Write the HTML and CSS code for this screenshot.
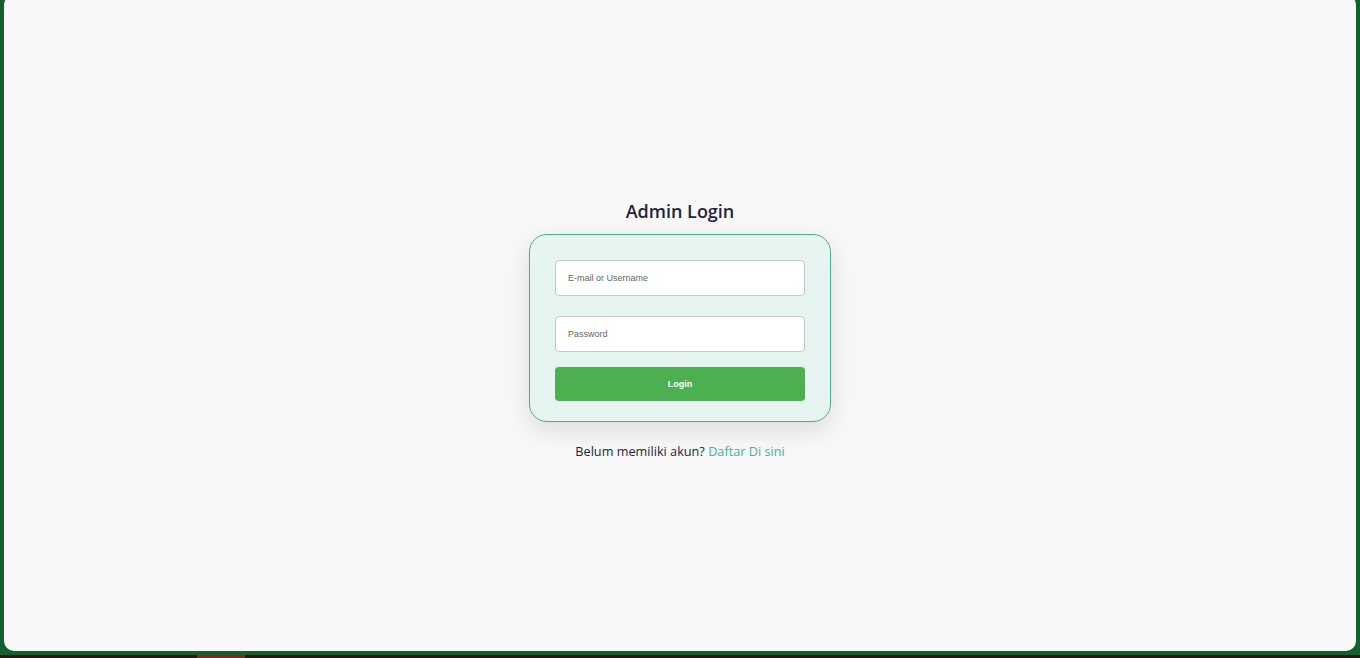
FILE: index.html
```html
<!DOCTYPE html>
<html lang="id">
<head>
<meta charset="utf-8">
<title>Admin Login</title>
<link rel="stylesheet" href="styles.css">
</head>
<body>
  <main class="window">
    <section class="login">
      <h1 class="login-title">Admin Login</h1>
      <form class="login-card">
        <input class="field" type="text" placeholder="E-mail or Username">
        <input class="field field-pass" type="password" placeholder="Password">
        <button class="btn" type="button">Login</button>
      </form>
      <p class="register">Belum memiliki akun? <a class="register-link" href="#">Daftar Di sini</a></p>
    </section>
  </main>
  <div class="taskbar"><span class="task-active"></span></div>
</body>
</html>
```
FILE: styles.css
```css
html, body {
  margin: 0;
  padding: 0;
}
body {
  width: 1360px;
  height: 658px;
  overflow: hidden;
  background: #135f2f;
  display: flex;
  flex-direction: column;
  font-family: "Open Sans", "Liberation Sans", sans-serif;
}
.window {
  margin: -5px 4px 0 4px;
  height: 656px;
  box-sizing: border-box;
  padding-top: 14px;
  background: #f8f8f8;
  border-radius: 10px;
  display: flex;
  align-items: center;
  justify-content: center;
}
.login {
  display: flex;
  flex-direction: column;
  align-items: center;
}
.login-title {
  margin: 0 0 11px;
  font-size: 18px;
  line-height: 24px;
  font-weight: 600;
  color: #1c2541;
}
.login-card {
  width: 302px;
  box-sizing: border-box;
  padding: 25px 25px 20px;
  background: #e6f5f1;
  border: 1px solid #4cae8a;
  border-radius: 18px;
  box-shadow: 0 8px 26px rgba(0, 0, 0, 0.12);
  display: flex;
  flex-direction: column;
}
.field {
  height: 36px;
  box-sizing: border-box;
  border: 1px solid #c8c8c8;
  border-radius: 4px;
  background: #ffffff;
  padding: 0 12px;
  font-family: "Liberation Sans", Arial, sans-serif;
  font-size: 9px;
  color: #333;
  outline: none;
}
.field::placeholder {
  color: #666;
}
.field-pass {
  margin-top: 20px;
}
.btn {
  margin-top: 15px;
  height: 34px;
  border: none;
  border-radius: 4px;
  background: #4caf50;
  color: #ffffff;
  font-family: "Liberation Sans", Arial, sans-serif;
  font-size: 9px;
  font-weight: 700;
}
.register {
  margin: 19px 0 0;
  font-size: 12.7px;
  line-height: 20px;
  color: #1c2541;
}
.register-link {
  color: #4cae9a;
  text-decoration: none;
}
.taskbar {
  margin-top: 4px;
  height: 3px;
  background: #2d1810;
  display: flex;
}
.task-active {
  margin-left: 197px;
  width: 48px;
  background: #7a2e1a;
}
```
